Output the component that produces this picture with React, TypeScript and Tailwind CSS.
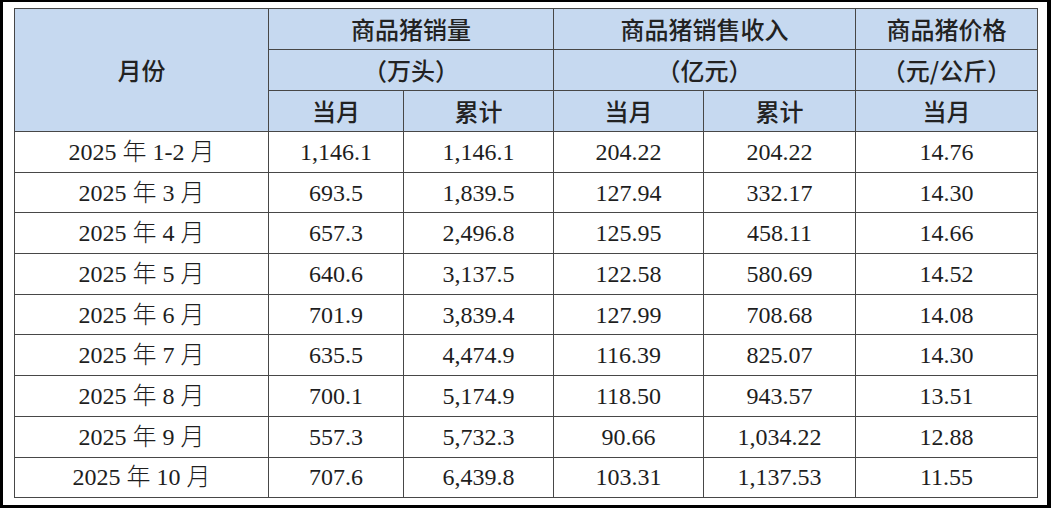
const rows = [
  ['2025 年 1-2 月', '1,146.1', '1,146.1', '204.22', '204.22', '14.76'],
  ['2025 年 3 月', '693.5', '1,839.5', '127.94', '332.17', '14.30'],
  ['2025 年 4 月', '657.3', '2,496.8', '125.95', '458.11', '14.66'],
  ['2025 年 5 月', '640.6', '3,137.5', '122.58', '580.69', '14.52'],
  ['2025 年 6 月', '701.9', '3,839.4', '127.99', '708.68', '14.08'],
  ['2025 年 7 月', '635.5', '4,474.9', '116.39', '825.07', '14.30'],
  ['2025 年 8 月', '700.1', '5,174.9', '118.50', '943.57', '13.51'],
  ['2025 年 9 月', '557.3', '5,732.3', '90.66', '1,034.22', '12.88'],
  ['2025 年 10 月', '707.6', '6,439.8', '103.31', '1,137.53', '11.55'],
];

const th = 'border-[1.5px] border-[#474747] bg-[#c6d9f0] font-medium text-[#222] text-center p-0';
const td = 'border-[1.5px] border-[#474747] text-center p-0';

export default function App() {
  return (
    <div className="w-[1051px] h-[508px] bg-white border-black border-t-[2px] border-l-[3px] border-r-[4px] border-b-[3px] pl-[11px] pt-[6px]">
      <table
        className="border-collapse table-fixed w-[1023px] text-[24px] leading-none"
        style={{ fontFamily: '"Noto Sans CJK SC", sans-serif' }}
      >
        <colgroup>
          <col className="w-[254px]" />
          <col className="w-[135px]" />
          <col className="w-[150px]" />
          <col className="w-[150px]" />
          <col className="w-[152px]" />
          <col className="w-[182px]" />
        </colgroup>
        <thead>
          <tr className="h-[41px]">
            <th rowSpan={3} className={th}>月份</th>
            <th colSpan={2} className={th}>商品猪销量</th>
            <th colSpan={2} className={th}>商品猪销售收入</th>
            <th className={th}>商品猪价格</th>
          </tr>
          <tr className="h-[41px]">
            <th colSpan={2} className={th}>（万头）</th>
            <th colSpan={2} className={th}>（亿元）</th>
            <th className={th}>（元/公斤）</th>
          </tr>
          <tr className="h-[41px]">
            <th className={th}>当月</th>
            <th className={th}>累计</th>
            <th className={th}>当月</th>
            <th className={th}>累计</th>
            <th className={th}>当月</th>
          </tr>
        </thead>
        <tbody
          className="text-[#1e1e1e] font-light"
          style={{ fontFamily: '"Liberation Serif", "Noto Sans CJK SC", serif' }}
        >
          {rows.map((r) => (
            <tr key={r[0]} className="h-[40.7px]">
              {r.map((c, i) => (
                <td key={i} className={td}>{c}</td>
              ))}
            </tr>
          ))}
        </tbody>
      </table>
    </div>
  );
}
